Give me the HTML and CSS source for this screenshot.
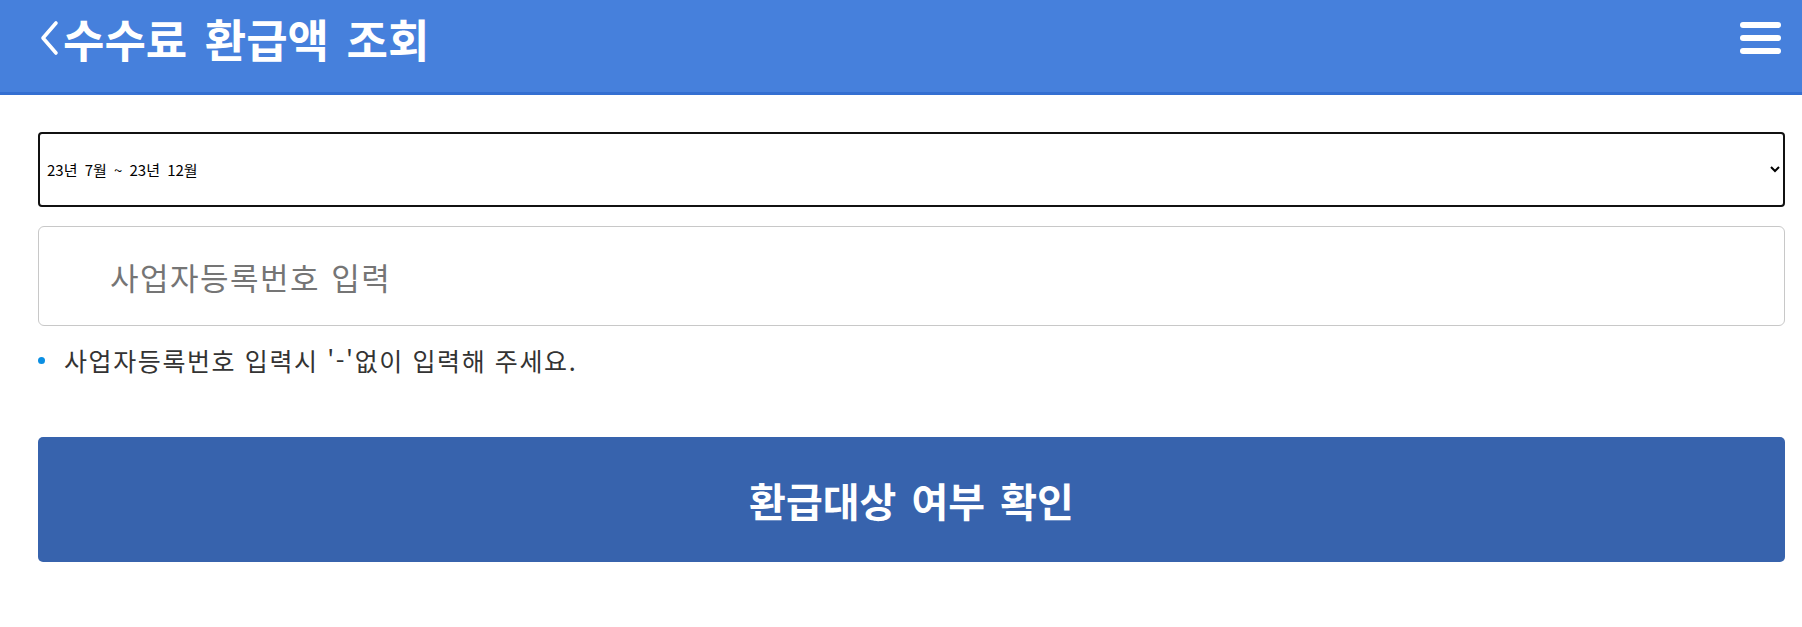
FILE: index.html
```html
<!DOCTYPE html>
<html lang="ko">
<head>
  <meta charset="UTF-8" />
  <meta name="viewport" content="width=device-width, initial-scale=1" />
  <title>수수료 환급액 조회</title>
  <link rel="stylesheet" href="styles.css">
</head>
<body>
  <header class="top-bar">
    <h1 class="top-title">
      <a class="back" href="#">
        <svg width="21" height="36" viewBox="0 0 21 36"><polyline points="18,3 5,18 18,33" fill="none" stroke="#fff" stroke-width="3.6" stroke-linecap="round" stroke-linejoin="round"/></svg>
      </a>수수료 환급액 조회
    </h1>
    <button class="menu" type="button" aria-label="메뉴">
      <span></span><span></span><span></span>
    </button>
  </header>
  <main class="content">
    <form id="refundForm" class="refund-form">
      <select id="period" name="period" class="period">
        <option value="2023H2" selected>23년 7월 ~ 23년 12월</option>
        <option value="2023H1">23년 1월 ~ 23년 6월</option>
      </select>
      <input type="text" id="bizNo" name="bizNo" class="biz-no" placeholder="사업자등록번호 입력" inputmode="numeric" />
      <ul class="notice">
        <li>사업자등록번호 입력시 '-'없이 입력해 주세요.</li>
      </ul>
      <button type="submit" class="submit">환급대상 여부 확인</button>
    </form>
  </main>
</body>
</html>
```

FILE: styles.css
```css
* {
  box-sizing: border-box;
}
body {
  margin: 0;
  font-family: "Noto Sans CJK KR", "Noto Sans", sans-serif;
  background: #fff;
  color: #333;
}
.top-bar {
  height: 95px;
  background: #4680dc;
  border-bottom: 3px solid #346fd1;
  display: flex;
  align-items: center;
  justify-content: space-between;
  padding: 0 21px 16px 38px;
}
.top-title {
  margin: 0;
  color: #fff;
  font-size: 45px;
  font-weight: 700;
  line-height: 1;
  word-spacing: 5px;
  display: flex;
  align-items: center;
}
.back {
  display: flex;
  margin-right: 4px;
}
.menu {
  width: 41px;
  height: 32px;
  padding: 0;
  border: none;
  background: none;
  display: flex;
  flex-direction: column;
  justify-content: space-between;
  cursor: pointer;
}
.menu span {
  display: block;
  height: 6px;
  border-radius: 3px;
  background: #fff;
}
.content {
  padding: 37px 17px 40px 38px;
}
.refund-form {
  display: flex;
  flex-direction: column;
}
.period {
  height: 75px;
  border: 2px solid #111;
  border-radius: 4px;
  padding: 0 8px 0 3px;
  font-family: inherit;
  font-size: 15px;
  word-spacing: 3px;
  color: #000;
  background: #fff;
}
.biz-no {
  margin-top: 19px;
  height: 100px;
  border: 1px solid #c8c8c8;
  border-radius: 6px;
  padding: 0 0 0 71px;
  font-family: inherit;
  font-size: 31px;
  letter-spacing: 1.5px;
  word-spacing: 1px;
  color: #333;
}
.biz-no::placeholder {
  color: #757575;
}
.notice {
  list-style: none;
  margin: 14px 0 0;
  padding: 0;
}
.notice li {
  position: relative;
  padding-left: 26px;
  font-size: 25px;
  line-height: 40px;
  letter-spacing: 1.6px;
  color: #333;
}
.notice li::before {
  content: "";
  position: absolute;
  left: 0;
  top: 17px;
  width: 7px;
  height: 7px;
  border-radius: 50%;
  background: #0b8fe3;
}
.submit {
  margin-top: 57px;
  height: 125px;
  border: none;
  border-radius: 5px;
  background: #3763ad;
  color: #fff;
  font-family: inherit;
  font-size: 40px;
  font-weight: 700;
  word-spacing: 4px;
  cursor: pointer;
}
```
